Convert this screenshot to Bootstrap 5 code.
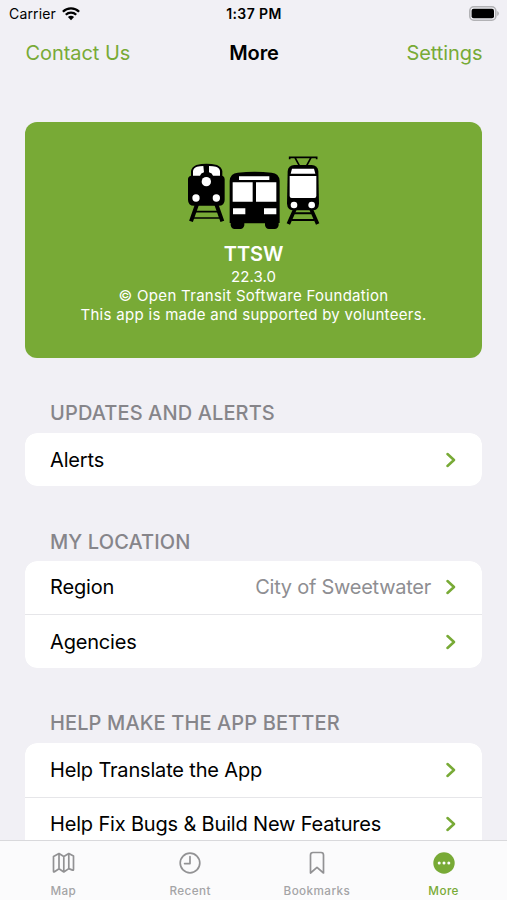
<!DOCTYPE html>
<html lang="en">
<head>
<meta charset="utf-8">
<meta name="viewport" content="width=device-width, initial-scale=1">
<title>More</title>
<link href="https://cdn.jsdelivr.net/npm/bootstrap@5.3.0/dist/css/bootstrap.min.css" rel="stylesheet">
<style>
  :root { --brand: #78aa36; }
  body { background: #f1f0f5; color: #000; font-family: Inter, "Liberation Sans", sans-serif; font-size: 20px; letter-spacing: -.17px; }
  svg { display: block; flex: none; }
  .brand { color: var(--brand); }
  .scroll-area { min-height: 0; }
  .status { height: 27px; font-size: 14px; line-height: 27px; padding: 0 8px 0 9px; letter-spacing: .16px; }
  .status .time { font-weight: 600; font-size: 14px; letter-spacing: .4px; }
  .titlebar { height: 51px; padding: 0 24.500px 0 25.500px; }
  .titlebar a { letter-spacing: -.06px; }
  .titlebar h1 { font-size: 20px; font-weight: 600; letter-spacing: -.1px; }
  .hero { margin: 44px 25px 0; height: 235.500px; padding-top: 33px; border-radius: 12px; background: var(--brand); color: #fff; font-size: 15px; line-height: 19px; letter-spacing: .3px; }
  .hero h2 { font-size: 20px; font-weight: 600; line-height: 24px; margin: 11px 0 1px; letter-spacing: -.1px; }
  .hero .version { letter-spacing: .1px; }
  .group-title { height: 75.200px; padding: 43.300px 25px 0; margin: 0 25px; font-size: 20px; line-height: 24px; font-weight: 500; color: #86858a; letter-spacing: .12px; }
  .group-title.after-single { height: 74.200px; }
  .rows { margin: 0 25px; border-radius: 12px; --bs-list-group-border-width: 0; }
  .rows .list-group-item { height: 53.700px; padding: 0 26.500px 0 25px; color: #000; background: #fff; }
  .rows .list-group-item + .list-group-item { border-top: 1px solid #e6e6e9; }
  .value { color: #8e8e92; letter-spacing: -.26px; margin-right: 14.500px; }
  .tabs { height: 60px; background: #fbfbfc; border-top: 1px solid #d9d9dc; font-size: 11.700px; font-weight: 500; line-height: 14px; letter-spacing: .42px; }
  .tabs a { color: #a4a4a6; padding-top: 10px; gap: 9px; }
  .tabs a.active { color: var(--brand); }
</style>
<script src="https://cdn.jsdelivr.net/npm/bootstrap@5.3.0/dist/js/bootstrap.bundle.min.js"></script>
</head>
<body class="vh-100 overflow-hidden d-flex flex-column">
<svg class="d-none"><symbol id="chev" viewBox="0 0 10 16"><path d="M1.500 2 8 8 1.500 14" fill="none" stroke="#78aa36" stroke-width="2.500" stroke-linecap="round" stroke-linejoin="round"/></symbol></svg>

<div class="scroll-area flex-grow-1 overflow-hidden">
  <div class="status row g-0">
    <div class="col d-flex align-items-center">
      <span>Carrier</span>
      <svg class="ms-1" width="20" height="14" viewBox="-2 0 20 14"><g fill="none" stroke="#000" stroke-width="2.300"><path d="M.9 4.700a11.500 11.500 0 0 1 16.200 0"/><path d="M3.800 7.800a7.400 7.400 0 0 1 10.400 0"/></g><path d="M5.900 10.100a4.500 4.500 0 0 1 6.200 0L9 13.300z"/></svg>
    </div>
    <div class="col-auto time">1:37 PM</div>
    <div class="col d-flex align-items-center justify-content-end">
      <svg width="30" height="15" viewBox="0 0 30 15"><rect x=".8" y=".8" width="26" height="13.400" rx="4" fill="#f1f0f5" stroke="#b2b2b5" stroke-width="1.600"/><rect x="2.600" y="2.700" width="22.400" height="9.600" rx="2"/><path d="M28.200 5v5q1.700-.8 1.700-2.500T28.200 5" fill="#b2b2b5"/></svg>
    </div>
  </div>
  <nav class="titlebar row g-0 align-items-center">
    <div class="col"><a class="brand text-decoration-none" href="#">Contact Us</a></div>
    <h1 class="col-auto mb-0">More</h1>
    <div class="col text-end"><a class="brand text-decoration-none" href="#">Settings</a></div>
  </nav>

  <section class="hero text-center">
    <svg class="mx-auto" width="135" height="76" viewBox="19 30 405 228">
      <!-- Locomotive -->
      <path d="M52 178 34 229M110 178l18 51" fill="none" stroke="#000" stroke-width="12"/>
      <path d="M48 200h66M42 219h78" stroke="#000" stroke-width="5"/>
      <path d="M34 92V78q2-12 16-18 30-7 62 0 14 6 16 18v14q7 2 7 10v62q0 18-18 18H43q-18 0-18-18v-62q0-8 9-10z"/>
      <path d="M40 92V78q1-9 12-13 8-2 19-2l2 19q-10 2-12 10zM121 92V78q-1-9-12-13-8-2-21-2v19q10 2 12 10z" fill="#fff"/>
      <circle cx="80" cy="109" r="18"/>
      <g fill="#fff"><circle cx="80" cy="110" r="14"/><circle cx="49" cy="159" r="11"/><circle cx="110" cy="159" r="11"/></g>
      <!-- Bus -->
      <path d="M150 107q2-22 24-24 51-5 102 0 22 2 24 24v127h-3v7q-2 11-12 11h-17q-10 0-12-11v-6h-62v6q-2 11-12 11h-17q-10 0-12-11v-7h-3z"/>
      <path d="M178 94h91v11h-91zM159 112h60v58h-60zM229 112h61v58h-61zM160 190h37v18h-37zM253 190h37v18h-37z" fill="#fff"/>
      <!-- Tram -->
      <path d="M330 43v-6h81v6M346 38l13 24M394 38l-13 24" fill="none" stroke="#000" stroke-width="5"/>
      <path d="m346 192-20 45M394 192l20 45" fill="none" stroke="#000" stroke-width="11"/>
      <path d="M344 205h52M336 225h68" stroke="#000" stroke-width="6"/>
      <path d="M324 78q2-17 20-18h52q18 1 20 18l2 98q-1 19-20 20h-56q-19-1-20-20z"/>
      <path d="M337 71h66l4 15h-74zM330 93h80v60q0 6-6 6h-68q-6 0-6-6z" fill="#fff"/>
      <g fill="#fff"><circle cx="343" cy="180" r="10"/><circle cx="396" cy="180" r="10"/></g>
    </svg>
    <h2>TTSW</h2>
    <div class="version">22.3.0</div>
    <div>© Open Transit Software Foundation</div>
    <div>This app is made and supported by volunteers.</div>
  </section>

  <h3 class="group-title">UPDATES AND ALERTS</h3>
  <div class="list-group rows overflow-hidden">
    <a href="#" class="list-group-item list-group-item-action d-flex align-items-center justify-content-between">Alerts<svg width="10" height="16"><use href="#chev"/></svg></a>
  </div>

  <h3 class="group-title after-single">MY LOCATION</h3>
  <div class="list-group rows overflow-hidden">
    <a href="#" class="list-group-item list-group-item-action d-flex align-items-center">Region<span class="value ms-auto">City of Sweetwater</span><svg width="10" height="16"><use href="#chev"/></svg></a>
    <a href="#" class="list-group-item list-group-item-action d-flex align-items-center justify-content-between">Agencies<svg width="10" height="16"><use href="#chev"/></svg></a>
  </div>

  <h3 class="group-title">HELP MAKE THE APP BETTER</h3>
  <div class="list-group rows overflow-hidden">
    <a href="#" class="list-group-item list-group-item-action d-flex align-items-center justify-content-between">Help Translate the App<svg width="10" height="16"><use href="#chev"/></svg></a>
    <a href="#" class="list-group-item list-group-item-action d-flex align-items-center justify-content-between">Help Fix Bugs &amp; Build New Features<svg width="10" height="16"><use href="#chev"/></svg></a>
  </div>
</div>

<footer class="tabs row g-0 flex-shrink-0 text-center">
  <a class="col d-flex flex-column align-items-center text-decoration-none" href="#">
    <svg width="24" height="24" viewBox="0 0 24 24" fill="none" stroke="#929294" stroke-width="1.700" stroke-linejoin="round"><path d="M2.500 5.500 8 2.500l4.800 3L17.800 2.500l4.700 2.500V18.500q0 1-1 .6L17.800 17.600 12.800 21 8 17.800 3.500 20.800q-1 .6-1-.5zM8 2.500v15.300M12.800 5.500V21M17.800 2.500v15.100"/></svg>
    <span>Map</span></a>
  <a class="col d-flex flex-column align-items-center text-decoration-none" href="#">
    <svg width="24" height="24" viewBox="0 0 24 24" fill="none" stroke="#929294" stroke-width="1.700"><circle cx="12" cy="12" r="9.800"/><path d="M12 5.700V12.600H6.600" stroke-linecap="round" stroke-linejoin="round"/></svg>
    <span>Recent</span></a>
  <a class="col d-flex flex-column align-items-center text-decoration-none" href="#">
    <svg width="24" height="24" viewBox="0 0 24 24" fill="none" stroke="#929294" stroke-width="1.700" stroke-linejoin="round"><path d="M5.500 4q0-2.500 2.500-2.500h8q2.500 0 2.500 2.500v18L12 16.400 5.500 22z"/></svg>
    <span>Bookmarks</span></a>
  <a class="col d-flex flex-column align-items-center text-decoration-none active" href="#">
    <svg width="24" height="24" viewBox="0 0 24 24"><circle cx="12" cy="12" r="10.700" fill="#78aa36"/><g fill="#fff"><circle cx="7.200" cy="12" r="1.500"/><circle cx="12" cy="12" r="1.500"/><circle cx="16.800" cy="12" r="1.500"/></g></svg>
    <span>More</span></a>
</footer>
</body>
</html>
